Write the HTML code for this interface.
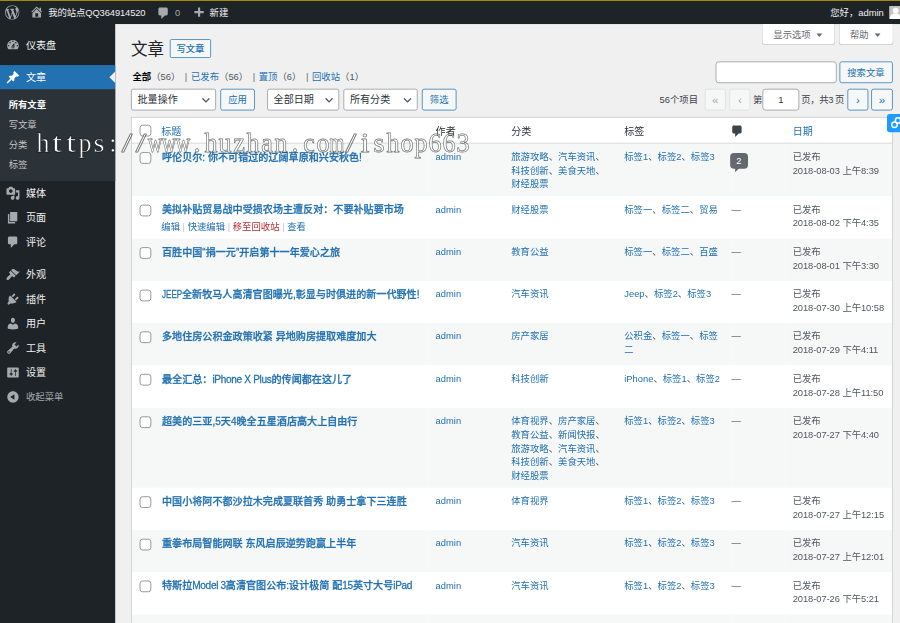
<!DOCTYPE html>
<html lang="zh-CN">
<head>
<meta charset="utf-8">
<title>文章 ‹ 我的站点QQ364914520 — WordPress</title>
<style>
*{box-sizing:border-box}
html,body{margin:0;padding:0;overflow:hidden}
#root{position:relative;width:900px;height:623px;overflow:hidden;background:#f0f0f1}
body{width:900px;height:623px;overflow:hidden;background:#f0f0f1;position:relative;font-family:"Liberation Sans","Noto Sans CJK SC",sans-serif}
#topline{position:absolute;left:0;top:0;width:900px;height:1px;background:#a48c00;z-index:50}
#wp{position:absolute;left:0;top:1px;width:1260px;height:870px;transform:scale(.72);transform-origin:0 0;background:#f0f0f1;color:#3c434a;font-size:13px;line-height:18px}
a{color:#2271b1;text-decoration:none}
/* admin bar */
#bar{position:absolute;left:0;top:0;width:1260px;height:32px;background:#1d2327;color:#f0f0f1;font-size:13px;line-height:32px;white-space:nowrap}
#bar .it{position:absolute;top:0;height:32px;line-height:34px}
#bar svg{position:absolute;fill:#a7aaad}
/* menu */
#menu{position:absolute;left:0;top:30px;padding-top:2px;width:160px;height:840px;background:#1d2327}
#menu .top{position:absolute;left:0;width:160px;height:34px;color:#f0f0f1;font-size:14px;line-height:34px;padding-left:36px;white-space:nowrap}
#menu .top svg{position:absolute;left:8px;top:7px;width:20px;height:20px;fill:#a7aaad}
#menu .cur{background:#2271b1;color:#fff}
#menu .cur svg{fill:#fff}
#menu .cur:after{content:"";position:absolute;right:0;top:9px;border:8px solid transparent;border-right-color:#f0f0f1}
#sub{position:absolute;left:0;top:92px;width:160px;height:127px;background:#2c3338}
#sub div{position:absolute;left:12px;font-size:13px;line-height:18px;color:#c3c4c7;white-space:nowrap}
#sub .on{color:#fff;font-weight:700}
/* content */
.meta{position:absolute;top:32px;height:29px;background:#fff;border:1px solid #c3c4c7;border-top:none;border-radius:0 0 4px 4px;color:#646970;font-size:13px;line-height:29px;padding:0 6px 0 15px;white-space:nowrap}
.meta i,.tri{display:inline-block;width:0;height:0;border:4.5px solid transparent;border-top:5.5px solid #646970;border-bottom:none;vertical-align:middle;margin:0 6px 1px 8px}
h1{position:absolute;left:182px;top:52px;margin:0;font-size:23px;font-weight:400;line-height:30px;color:#1d2327;white-space:nowrap}
.pta{position:absolute;left:236px;top:53px;height:26px;padding:0 8px;border:1px solid #2271b1;border-radius:2px;background:#f6f7f7;color:#2271b1;font-size:13px;font-weight:500;line-height:25.5px;white-space:nowrap}
#subsub{position:absolute;left:182.5px;top:92.5px;font-size:13px;line-height:26px;color:#646970;white-space:nowrap}
#subsub a{padding:0 2.6px 0 1.5px}
#subsub b{color:#000;font-weight:700}
#subsub .c{color:#50575e}
.inp{position:absolute;background:#fff;border:1px solid #8c8f94;border-radius:4px;height:30px}
.btn{position:absolute;height:30px;border:1px solid #2271b1;border-radius:3px;background:#f6f7f7;color:#2271b1;font-size:13px;line-height:29px;text-align:center;white-space:nowrap}
.btn.dis{border-color:#dcdcde;color:#a7aaad;background:#f6f7f7}
.sel{position:absolute;height:30px;background:#fff;border:1px solid #8c8f94;border-radius:3px;color:#2c3338;font-size:14px;line-height:29.5px;padding-left:8px;white-space:nowrap}
.sel svg{position:absolute;right:5px;top:7px;width:16px;height:16px}
.pg{position:absolute;font-size:13px;line-height:30px;color:#3c434a;white-space:nowrap}
/* table */
#tbl{position:absolute;left:182px;top:161px;width:1058px;border:1px solid #c3c4c7;background:#fff;border-spacing:0;table-layout:fixed;box-shadow:0 1px 1px rgba(0,0,0,.04)}
#tbl th{font-size:14px;line-height:19px;font-weight:400;text-align:left;padding:10px 10px 6px;vertical-align:top;border-bottom:1px solid #b4b6ba;color:#2c3338;white-space:nowrap}
#tbl td{font-size:13px;line-height:19px;padding:8.8px 10px 7.2px;vertical-align:top;color:#50575e;word-wrap:break-word}
#tbl tr.o{background:#f6f7f7}
#tbl .ck{width:31px;padding:0 0 0 3px}
#tbl td.ck{padding:12px 0 0 11px}
#tbl th.ck{padding:10px 0 0 11px}
.cb{display:block;width:16px;height:16px;border:1.2px solid #6d7177;border-radius:4px;background:#fff}
#tbl .au{width:105px}
#tbl .ca{width:157px}#tbl .tg{width:159px}
#tbl .cm{width:75px;padding-left:0;padding-right:0}
#tbl .dt{width:148px;white-space:nowrap;letter-spacing:-.1px}
#tbl strong{display:block;position:relative;top:1.1px;padding-left:1px;font-size:14px;font-weight:500;-webkit-text-stroke:.35px #2271b1;margin-bottom:2.8px;white-space:nowrap}
.ra{position:relative;top:.7px;padding-top:2px;height:21px;font-size:13px;color:#c3c4c7;white-space:nowrap;visibility:hidden}
.ra.show{visibility:visible}
.ra .tr{color:#b32d2e}
#tbl tr.last td{padding-top:16px}
.dash{color:#50575e}
.l{letter-spacing:-.45px}
.L{display:inline-block;transform:scaleX(.8);transform-origin:0 50%;margin-right:-7.2px}
.bub{display:inline-block;position:relative;margin:4px 0 0 -2px;width:24.5px;height:22.5px;border-radius:5.5px;background:#646970;color:#fff;font-size:13px;line-height:22px;text-align:center}
.bub:after{content:"";position:absolute;left:7px;bottom:-5px;border-top:6px solid #646970;border-right:6px solid transparent}
#wm{position:absolute;left:0;top:0;width:900px;height:623px;z-index:40;pointer-events:none}
#link{position:absolute;left:887px;top:113.900px;width:20px;height:19px;z-index:30}
</style>
</head>
<body>
<div id="root">
<div id="topline"></div>
<div id="wp">
<div id="bar"><svg viewBox="0 0 20 20" style="left:7px;top:6px;width:20px;height:20px" ><path d="M20 10c0-5.51-4.49-10-10-10C4.48 0 0 4.49 0 10c0 5.52 4.48 10 10 10 5.51 0 10-4.48 10-10zM7.78 15.37L4.37 6.22c.55-.02 1.17-.08 1.17-.08.5-.06.44-1.13-.06-1.11 0 0-1.45.11-2.37.11-.18 0-.37 0-.58-.01C4.12 2.69 6.87 1.11 10 1.11c2.33 0 4.45.87 6.05 2.34-.68-.11-1.65.39-1.65 1.58 0 .74.45 1.36.9 2.1.35.61.55 1.36.55 2.46 0 1.49-1.4 5-1.4 5l-3.03-8.37c.54-.02.82-.17.82-.17.5-.05.44-1.25-.06-1.22 0 0-1.44.12-2.38.12-.87 0-2.33-.12-2.33-.12-.5-.03-.56 1.2-.06 1.22l.92.08 1.26 3.41zM17.41 10c.24-.64.74-1.87.43-4.25.7 1.29 1.05 2.71 1.05 4.25 0 3.29-1.73 6.24-4.4 7.78.97-2.59 1.94-5.2 2.92-7.78zM6.1 18.09C3.12 16.65 1.11 13.53 1.11 10c0-1.3.23-2.48.72-3.59C3.25 10.3 4.67 14.2 6.1 18.09zm4.03-6.63l2.58 6.98c-.86.29-1.76.45-2.71.45-.79 0-1.57-.11-2.29-.33.81-2.38 1.62-4.74 2.42-7.1z"/></svg><svg viewBox="0 0 20 20" style="left:41px;top:5px;width:20px;height:20px" ><path d="M16 8.5l1.53 1.53-1.06 1.06L10 4.62l-6.47 6.47-1.06-1.06L10 2.5l4 4v-2h2v4zm-6-2.46l6 5.99V18H4v-5.97zM12 17v-5H8v5h4z"/></svg><div class="it" style="left:67px;letter-spacing:-.15px">我的站点QQ364914520</div><svg viewBox="0 0 20 20" style="left:217px;top:7px;width:20px;height:20px" ><path d="M5 2h9c1.1 0 2 .9 2 2v7c0 1.1-.9 2-2 2h-2l-5 5v-5H5c-1.1 0-2-.9-2-2V4c0-1.1.9-2 2-2z"/></svg><div class="it" style="left:243px;color:#a7aaad">0</div><svg viewBox="0 0 20 20" style="left:266px;top:7px;width:20px;height:20px" ><path d="M17 7v3h-5v5H9v-5H4V7h5V2h3v5h5z"/></svg><div class="it" style="left:291px">新建</div><div class="it" style="left:1153px">您好，admin</div><div style="position:absolute;left:1235px;top:7px;width:18px;height:18px;background:#c5c5c5;overflow:hidden"><svg viewBox="0 0 18 18" style="left:0;top:0;width:18px;height:18px;fill:#fff"><circle cx="9" cy="6.3" r="4"/><path d="M1 18c0-5 3-7.5 8-7.5s8 2.500 8 7.500z"/></svg></div></div>
<div id="menu"><div class="top" style="top:14px"><svg viewBox="0 0 20 20" style="" ><path d="M3.76 16h12.48c1.1-1.37 1.76-3.11 1.76-5 0-4.42-3.58-8-8-8s-8 3.58-8 8c0 1.89.66 3.63 1.76 5zM10 4c.55 0 1 .45 1 1s-.45 1-1 1-1-.45-1-1 .45-1 1-1zM6 6c.55 0 1 .45 1 1s-.45 1-1 1-1-.45-1-1 .45-1 1-1zm8 0c.55 0 1 .45 1 1s-.45 1-1 1-1-.45-1-1 .45-1 1-1zm-5.37 5.55L12 7v6c0 1.1-.9 2-2 2s-2-.9-2-2c0-.57.24-1.08.63-1.45zM4 10c.55 0 1 .45 1 1s-.45 1-1 1-1-.45-1-1 .45-1 1-1zm12 0c.55 0 1 .45 1 1s-.45 1-1 1-1-.45-1-1 .45-1 1-1zm-5 3c0-.55-.45-1-1-1s-1 .45-1 1 .45 1 1 1 1-.45 1-1z"/></svg>仪表盘</div><div class="top cur" style="top:59px"><svg viewBox="0 0 20 20" style="" ><path d="M10.44 3.02l1.82-1.82 6.36 6.35-1.83 1.82c-1.05-.68-2.48-.57-3.41.36l-.75.75c-.92.93-1.04 2.35-.35 3.41l-1.83 1.82-2.41-2.41-2.8 2.79c-.42.42-3.38 2.71-3.8 2.29s1.86-3.39 2.28-3.81l2.79-2.79L4.1 9.36l1.83-1.82c1.05.69 2.48.57 3.4-.36l.75-.75c.93-.92 1.05-2.35.36-3.41z"/></svg>文章</div><div class="top" style="top:220px"><svg viewBox="0 0 20 20" style="" ><path d="M13 11V4c0-.55-.45-1-1-1h-1.67L9 1H5L3.67 3H2c-.55 0-1 .45-1 1v7c0 .55.45 1 1 1h10c.55 0 1-.45 1-1zM7 4.5c1.38 0 2.5 1.12 2.5 2.5S8.38 9.5 7 9.5 4.5 8.38 4.5 7 5.62 4.5 7 4.5zM14 6h5v10.5c0 1.38-1.12 2.5-2.5 2.5S14 17.88 14 16.5s1.12-2.5 2.5-2.5c.17 0 .34.02.5.05V9h-3V6zm-4 8.05V13h2v3.5c0 1.38-1.12 2.5-2.5 2.5S7 17.880 7 16.5 8.12 14 9.5 14c.17 0 .34.02.5.05z"/></svg>媒体</div><div class="top" style="top:254px"><svg viewBox="0 0 20 20" style="" ><path d="M6 15V2h10v13H6zm-1 1h8v2H3V5h2v11z"/></svg>页面</div><div class="top" style="top:288px"><svg viewBox="0 0 20 20" style="" ><path d="M5 2h9c1.1 0 2 .9 2 2v7c0 1.1-.9 2-2 2h-2l-5 5v-5H5c-1.1 0-2-.9-2-2V4c0-1.1.9-2 2-2z"/></svg>评论</div><div class="top" style="top:333px"><svg viewBox="0 0 20 20" style="" ><path d="M14.48 11.06L7.41 3.99l1.5-1.5c.5-.56 2.3-.47 3.51.32 1.21.8 1.43 1.28 2.91 2.1 1.18.64 2.45 1.26 4.45.85zm-.71.71L6.7 4.7 4.93 6.47c-.39.39-.39 1.02 0 1.41l1.06 1.06c.39.39.39 1.03 0 1.42-.6.6-1.43 1.11-2.21 1.69-.35.26-.7.53-1.01.84C1.43 14.23.4 16.08 1.4 17.07c.99 1 2.84-.03 4.18-1.36.31-.31.58-.66.85-1.01.57-.78 1.08-1.61 1.69-2.21.39-.39 1.02-.39 1.41 0l1.060 1.060c.39.39 1.02.39 1.41 0z"/></svg>外观</div><div class="top" style="top:367px"><svg viewBox="0 0 20 20" style="" ><path d="M13.11 4.36L9.87 7.6 8 5.73l3.24-3.24c.35-.34 1.05-.2 1.56.32.52.51.66 1.21.31 1.55zm-8 1.77l.91-1.12 9.01 9.01-1.19.84c-.71.71-2.63 1.16-3.82 1.16H6.14L4.9 17.26c-.59.59-1.54.59-2.12 0-.59-.58-.59-1.53 0-2.12L4 13.9v-3.880c0-1.2.45-3.11 1.11-3.89zm7.26 3.97l3.24-3.24c.34-.35 1.04-.21 1.55.31.52.51.66 1.21.31 1.55l-3.24 3.25z"/></svg>插件</div><div class="top" style="top:401px"><svg viewBox="0 0 20 20" style="" ><path d="M10 9.25c-2.27 0-2.73-3.44-2.73-3.44C7 4.02 7.82 2 9.97 2c2.16 0 2.98 2.02 2.71 3.81 0 0-.41 3.44-2.68 3.44zm0 2.57L12.72 10c2.39 0 4.52 2.33 4.52 4.53v2.49s-3.65 1.13-7.24 1.13c-3.65 0-7.24-1.13-7.24-1.13v-2.49c0-2.25 1.94-4.48 4.47-4.48z"/></svg>用户</div><div class="top" style="top:435px"><svg viewBox="0 0 20 20" style="" ><path d="M16.68 9.77c-1.34 1.34-3.3 1.67-4.95.99l-5.41 6.52c-.99.99-2.59.99-3.58 0s-.99-2.59 0-3.57l6.52-5.42c-.68-1.65-.35-3.61.99-4.95 1.28-1.28 3.12-1.62 4.72-1.06l-2.89 2.89 2.82 2.82 2.86-2.87c.53 1.58.18 3.39-1.08 4.65zM3.81 16.21c.4.39 1.04.39 1.43 0 .4-.4.4-1.04 0-1.43-.39-.4-1.03-.4-1.43 0-.39.39-.39 1.03 0 1.43z"/></svg>工具</div><div class="top" style="top:469px"><svg viewBox="0 0 20 20" style="" ><path d="M18 16V4c0-.55-.45-1-1-1H3c-.55 0-1 .45-1 1v12c0 .55.45 1 1 1h14c.55 0 1-.45 1-1zM8 11h1c.55 0 1 .45 1 1s-.45 1-1 1H8v1.5c0 .28-.22.5-.5.5s-.5-.22-.5-.5V13H6c-.55 0-1-.45-1-1s.45-1 1-1h1V5.5c0-.28.22-.5.5-.5s.5.22.5.5V11zm5-2h-1c-.55 0-1-.45-1-1s.45-1 1-1h1V5.5c0-.28.22-.5.5-.5s.5.22.5.5V7h1c.55 0 1 .45 1 1s-.45 1-1 1h-1v5.5c0 .28-.22.5-.5.5s-.5-.22-.5-.5V9z"/></svg>设置</div><div class="top" style="top:503px;font-size:13px;color:#a7aaad"><svg viewBox="0 0 20 20" style="" ><path d="M10 2.16c4.33 0 7.84 3.51 7.84 7.84s-3.51 7.84-7.84 7.84S2.16 14.33 2.16 10 5.67 2.16 10 2.16zm2 11.72V6.120L6.180 9.970z"/></svg>收起菜单</div><div id="sub" style="top:93px"><div class="on" style="top:12px">所有文章</div><div style="top:40px">写文章</div><div style="top:68px">分类</div><div style="top:96px">标签</div></div></div>
<div class="meta" style="left:1058px;width:102px">显示选项<i></i></div><div class="meta" style="left:1164.5px;width:76.5px">帮助<i></i></div><h1>文章</h1><div class="pta">写文章</div><div id="subsub"><a><b>全部</b><span class="c">（56）</span></a> | <a>已发布<span class="c">（56）</span></a> | <a>置顶<span class="c">（6）</span></a> | <a>回收站<span class="c">（1）</span></a></div><div class="inp" style="left:994px;top:84px;width:168px"></div><div class="btn" style="left:1165.5px;top:84px;width:74.5px">搜索文章</div><div class="sel" style="left:182px;top:122px;width:118px">批量操作<svg viewBox="0 0 20 20"><path d="M5 6l5 5 5-5 2 1-7 7-7-7 2-1z" fill="#50575e"/></svg></div><div class="btn" style="left:306px;top:122px;width:48px">应用</div><div class="sel" style="left:371px;top:122px;width:100px">全部日期<svg viewBox="0 0 20 20"><path d="M5 6l5 5 5-5 2 1-7 7-7-7 2-1z" fill="#50575e"/></svg></div><div class="sel" style="left:477px;top:122px;width:103px">所有分类<svg viewBox="0 0 20 20"><path d="M5 6l5 5 5-5 2 1-7 7-7-7 2-1z" fill="#50575e"/></svg></div><div class="btn" style="left:586px;top:122px;width:48px">筛选</div><div class="pg" style="left:916px;top:122px">56个项目</div><div class="btn dis" style="left:979px;top:122px;width:29px;font-size:16px">«</div><div class="btn dis" style="left:1013px;top:122px;width:29px;font-size:16px">‹</div><div class="pg" style="left:1046px;top:122px">第</div><div class="inp" style="left:1059px;top:122px;width:51px;text-align:center;font-size:13px;line-height:28px;color:#2c3338">1</div><div class="pg" style="left:1113px;top:122px;letter-spacing:-.6px">页，共3 页</div><div class="btn" style="left:1177px;top:122px;width:29px;font-size:16px">›</div><div class="btn" style="left:1210px;top:122px;width:30px;font-size:16px">»</div><table id="tbl"><thead><tr><th class="ck"><span class="cb"></span></th><th><a>标题</a></th><th class="au">作者</th><th class="ca">分类</th><th class="tg">标签</th><th class="cm"><svg viewBox="0 0 20 20" style="width:20px;height:20px;fill:#3c434a;display:block;margin:-1px 0 0 -2px" ><path d="M5 2h9c1.1 0 2 .9 2 2v7c0 1.1-.9 2-2 2h-2l-5 5v-5H5c-1.1 0-2-.9-2-2V4c0-1.1.9-2 2-2z"/></svg></th><th class="dt"><a>日期</a></th></tr></thead><tbody><tr class="o"><td class="ck"><span class="cb"></span></td><td><strong><a>呼伦贝尔: 你不可错过的辽阔草原和兴安秋色!</a></strong><div class="ra"><a>编辑</a> | <a>快速编辑</a> | <a class="tr">移至回收站</a> | <a>查看</a></div></td><td class="au"><a>admin</a></td><td class="ca"><a>旅游攻略</a>、<a>汽车资讯</a>、<a>科技创新</a>、<a>美食天地</a>、<a>财经股票</a></td><td class="tg"><a>标签1</a>、<a>标签2</a>、<a>标签3</a></td><td class="cm"><span class="bub">2</span></td><td class="dt">已发布<br>2018-08-03 上午8:39</td></tr><tr><td class="ck"><span class="cb"></span></td><td><strong><a>美拟补贴贸易战中受损农场主遭反对：不要补贴要市场</a></strong><div class="ra show"><a>编辑</a> | <a>快速编辑</a> | <a class="tr">移至回收站</a> | <a>查看</a></div></td><td class="au"><a>admin</a></td><td class="ca"><a>财经股票</a></td><td class="tg"><a>标签一</a>、<a>标签二</a>、<a>贸易</a></td><td class="cm"><span class="dash">—</span></td><td class="dt">已发布<br>2018-08-02 下午4:35</td></tr><tr class="o"><td class="ck"><span class="cb"></span></td><td><strong><a>百胜中国“捐一元”开启第十一年爱心之旅</a></strong><div class="ra"><a>编辑</a> | <a>快速编辑</a> | <a class="tr">移至回收站</a> | <a>查看</a></div></td><td class="au"><a>admin</a></td><td class="ca"><a>教育公益</a></td><td class="tg"><a>标签一</a>、<a>标签二</a>、<a>百盛</a></td><td class="cm"><span class="dash">—</span></td><td class="dt">已发布<br>2018-08-01 下午3:30</td></tr><tr><td class="ck"><span class="cb"></span></td><td><strong><a><span class="L">JEEP</span>全新牧马人高清官图曝光,彰显与时俱进的新一代野性!</a></strong><div class="ra"><a>编辑</a> | <a>快速编辑</a> | <a class="tr">移至回收站</a> | <a>查看</a></div></td><td class="au"><a>admin</a></td><td class="ca"><a>汽车资讯</a></td><td class="tg"><a>Jeep</a>、<a>标签2</a>、<a>标签3</a></td><td class="cm"><span class="dash">—</span></td><td class="dt">已发布<br>2018-07-30 上午10:58</td></tr><tr class="o"><td class="ck"><span class="cb"></span></td><td><strong><a>多地住房公积金政策收紧 异地购房提取难度加大</a></strong><div class="ra"><a>编辑</a> | <a>快速编辑</a> | <a class="tr">移至回收站</a> | <a>查看</a></div></td><td class="au"><a>admin</a></td><td class="ca"><a>房产家居</a></td><td class="tg"><a>公积金</a>、<a>标签一</a>、<a>标签二</a></td><td class="cm"><span class="dash">—</span></td><td class="dt">已发布<br>2018-07-29 下午4:11</td></tr><tr><td class="ck"><span class="cb"></span></td><td><strong><a>最全汇总：<span class="l">iPhone X Plus</span>的传闻都在这儿了</a></strong><div class="ra"><a>编辑</a> | <a>快速编辑</a> | <a class="tr">移至回收站</a> | <a>查看</a></div></td><td class="au"><a>admin</a></td><td class="ca"><a>科技创新</a></td><td class="tg"><a>iPhone</a>、<a>标签1</a>、<a>标签2</a></td><td class="cm"><span class="dash">—</span></td><td class="dt">已发布<br>2018-07-28 上午11:50</td></tr><tr class="o"><td class="ck"><span class="cb"></span></td><td><strong><a>超美的三亚,5天4晚全五星酒店高大上自由行</a></strong><div class="ra"><a>编辑</a> | <a>快速编辑</a> | <a class="tr">移至回收站</a> | <a>查看</a></div></td><td class="au"><a>admin</a></td><td class="ca"><a>体育视界</a>、<a>房产家居</a>、<a>教育公益</a>、<a>新闻快报</a>、<a>旅游攻略</a>、<a>汽车资讯</a>、<a>科技创新</a>、<a>美食天地</a>、<a>财经股票</a></td><td class="tg"><a>标签1</a>、<a>标签2</a>、<a>标签3</a></td><td class="cm"><span class="dash">—</span></td><td class="dt">已发布<br>2018-07-27 下午4:40</td></tr><tr><td class="ck"><span class="cb"></span></td><td><strong><a>中国小将阿不都沙拉木完成夏联首秀 助勇士拿下三连胜</a></strong><div class="ra"><a>编辑</a> | <a>快速编辑</a> | <a class="tr">移至回收站</a> | <a>查看</a></div></td><td class="au"><a>admin</a></td><td class="ca"><a>体育视界</a></td><td class="tg"><a>标签1</a>、<a>标签2</a>、<a>标签3</a></td><td class="cm"><span class="dash">—</span></td><td class="dt">已发布<br>2018-07-27 上午12:15</td></tr><tr class="o"><td class="ck"><span class="cb"></span></td><td><strong><a>重拳布局智能网联 东风启辰逆势跑赢上半年</a></strong><div class="ra"><a>编辑</a> | <a>快速编辑</a> | <a class="tr">移至回收站</a> | <a>查看</a></div></td><td class="au"><a>admin</a></td><td class="ca"><a>汽车资讯</a></td><td class="tg"><a>标签1</a>、<a>标签2</a>、<a>标签3</a></td><td class="cm"><span class="dash">—</span></td><td class="dt">已发布<br>2018-07-27 上午12:01</td></tr><tr><td class="ck"><span class="cb"></span></td><td><strong><a>特斯拉<span class="l">Model 3</span>高清官图公布:设计极简 配<span class="l">15</span>英寸大号<span class="l">iPad</span></a></strong><div class="ra"><a>编辑</a> | <a>快速编辑</a> | <a class="tr">移至回收站</a> | <a>查看</a></div></td><td class="au"><a>admin</a></td><td class="ca"><a>汽车资讯</a></td><td class="tg"><a>标签1</a>、<a>标签2</a>、<a>标签3</a></td><td class="cm"><span class="dash">—</span></td><td class="dt">已发布<br>2018-07-26 下午5:21</td></tr><tr class="o last"><td class="ck"><span class="cb"></span></td><td><strong><a>上半年中国消费者出境游热情高 欧洲深度游受青睐</a></strong><div class="ra"><a>编辑</a> | <a>快速编辑</a> | <a class="tr">移至回收站</a> | <a>查看</a></div></td><td class="au"><a>admin</a></td><td class="ca"><a>旅游攻略</a></td><td class="tg"><a>标签1</a>、<a>标签2</a>、<a>标签3</a></td><td class="cm"><span class="dash">—</span></td><td class="dt">已发布<br>2018-07-26 下午5:02</td></tr></tbody></table>
</div>
<svg id="link" viewBox="0 0 20 19"><rect width="20" height="18.2" rx="2.6" fill="#1f9bff"/><circle cx="7.5" cy="10.8" r="2.7" fill="none" stroke="#fff" stroke-width="1.5"/><circle cx="11" cy="6.500" r="2.7" fill="none" stroke="#fff" stroke-width="1.5"/></svg>
<svg id="wm" viewBox="0 0 900 623"><defs><mask id="wmm" maskUnits="userSpaceOnUse" x="0" y="100" width="900" height="80"><text x="39.24 55.65 70.70 84.40 100.54 117.62 130.91 145.97 158.82 173.87 188.92 208.33 219.88 234.94 250.78 265.04 280.88 295.15 313.70 326.04 340.31 354.41 371.77 387.85 401.61 415.58 430.63 445.69 460.74 475.80 490.85" y="0" transform="translate(0,152.0) scale(0.93,1.0)" style="font-family:'Liberation Serif', serif;font-size:28px;fill:#fff;stroke:#000;stroke-width:0.5px">h<tspan textLength="11.29" lengthAdjust="spacingAndGlyphs">t</tspan><tspan textLength="11.29" lengthAdjust="spacingAndGlyphs">t</tspan>p<tspan textLength="11.83" lengthAdjust="spacingAndGlyphs">s</tspan>:<tspan textLength="11.29" lengthAdjust="spacingAndGlyphs">/</tspan><tspan textLength="11.29" lengthAdjust="spacingAndGlyphs">/</tspan><tspan textLength="15.70" lengthAdjust="spacingAndGlyphs">w</tspan><tspan textLength="15.70" lengthAdjust="spacingAndGlyphs">w</tspan><tspan textLength="15.70" lengthAdjust="spacingAndGlyphs">w</tspan>.huzhan.co<tspan textLength="15.91" lengthAdjust="spacingAndGlyphs">m</tspan><tspan textLength="11.29" lengthAdjust="spacingAndGlyphs">/</tspan><tspan textLength="9.25" lengthAdjust="spacingAndGlyphs">i</tspan><tspan textLength="11.83" lengthAdjust="spacingAndGlyphs">s</tspan>hop663</text></mask></defs><text x="39.24 55.65 70.70 84.40 100.54 117.62 130.91 145.97 158.82 173.87 188.92 208.33 219.88 234.94 250.78 265.04 280.88 295.15 313.70 326.04 340.31 354.41 371.77 387.85 401.61 415.58 430.63 445.69 460.74 475.80 490.85" y="0" transform="translate(0,152.0) scale(0.93,1.0)" style="font-family:'Liberation Serif', serif;font-size:28px;fill:#000;stroke:#000;stroke-width:0.9px;stroke-linejoin:round;opacity:0.58">h<tspan textLength="11.29" lengthAdjust="spacingAndGlyphs">t</tspan><tspan textLength="11.29" lengthAdjust="spacingAndGlyphs">t</tspan>p<tspan textLength="11.83" lengthAdjust="spacingAndGlyphs">s</tspan>:<tspan textLength="11.29" lengthAdjust="spacingAndGlyphs">/</tspan><tspan textLength="11.29" lengthAdjust="spacingAndGlyphs">/</tspan><tspan textLength="15.70" lengthAdjust="spacingAndGlyphs">w</tspan><tspan textLength="15.70" lengthAdjust="spacingAndGlyphs">w</tspan><tspan textLength="15.70" lengthAdjust="spacingAndGlyphs">w</tspan>.huzhan.co<tspan textLength="15.91" lengthAdjust="spacingAndGlyphs">m</tspan><tspan textLength="11.29" lengthAdjust="spacingAndGlyphs">/</tspan><tspan textLength="9.25" lengthAdjust="spacingAndGlyphs">i</tspan><tspan textLength="11.83" lengthAdjust="spacingAndGlyphs">s</tspan>hop663</text><rect x="0" y="100" width="900" height="80" fill="#fff" mask="url(#wmm)"/></svg>
</div>
</body>
</html>
